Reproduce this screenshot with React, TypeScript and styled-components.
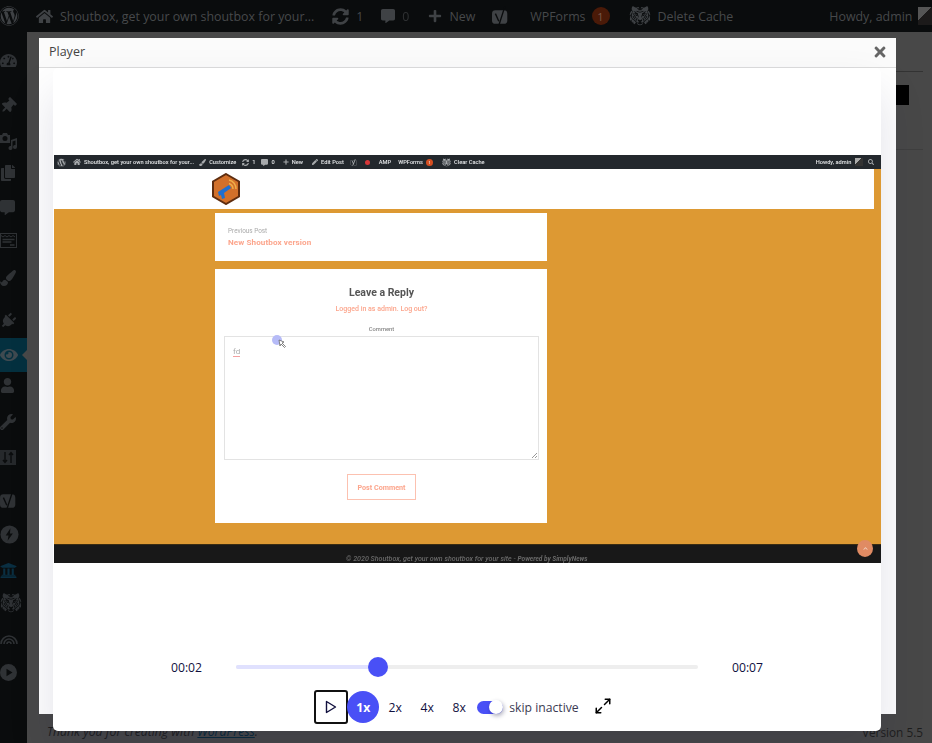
import * as React from 'react';
import styled, {createGlobalStyle} from 'styled-components';
import {
  FaWordpress, FaHome, FaSyncAlt, FaCommentAlt, FaPlus, FaYoast, FaTachometerAlt, FaThumbtack,
  FaCopy, FaPaintBrush, FaPlug, FaEye, FaUser, FaWrench, FaUniversity,
  FaPen, FaSearch, FaTimes, FaChevronUp,
} from 'react-icons/fa';
import {GiTigerHead} from 'react-icons/gi';
import {Maximize2} from 'lucide-react';

const GlobalStyle = createGlobalStyle`
  html, body {
    margin: 0;
    height: 743px;
    overflow: hidden;
    background: #484848;
  }
`;

const Page = styled.div`
  position: relative;
  height: 743px;
  display: flex;
  flex-direction: column;
  font-family: "Open Sans", "Noto Sans", sans-serif;
  overflow: hidden;
`;

/* wp admin bar behind the dialog */
const AdminBar = styled.div`
  flex: 0 0 32px;
  display: flex;
  align-items: center;
  background: #0a0c0d;
  color: #47494b;
  font-size: 12.4px;
  white-space: nowrap;
  overflow: hidden;
`;

const BarItem = styled.div<{ $left: number }>`
  display: flex;
  align-items: center;
  gap: 7px;
  margin-left: ${p => p.$left}px;
  svg { color: #3f4245; flex: none; }
`;

const Badge = styled.span`
  width: 18px;
  height: 18px;
  margin-left: -1px;
  border-radius: 50%;
  background: #4a1a08;
  color: #7a5a4c;
  font-size: 11px;
  display: flex;
  align-items: center;
  justify-content: center;
`;

const Avatar = styled.div`
  width: 15px;
  height: 18px;
  margin-left: -1px;
  background: linear-gradient(135deg, #555 0 40%, #1c1a1a 40% 100%);
`;

const Main = styled.div`
  flex: 1;
  display: flex;
  min-height: 0;
`;

const Sidebar = styled.div`
  flex: 0 0 27px;
  background: #0a0c0d;
  display: flex;
  flex-direction: column;
  padding-top: 11px;
  color: #2f3235;
`;

const SideItem = styled.div<{ $gap: number; $active?: boolean; $blue?: boolean }>`
  position: relative;
  height: 34px;
  margin-top: ${p => p.$gap}px;
  flex: none;
  display: flex;
  align-items: center;
  color: ${p => (p.$blue ? '#0a2f42' : '#2f3235')};
  background: ${p => (p.$active ? '#04303f' : 'transparent')};
  ${p => p.$active && `
    color: #3f4a50;
    &::after {
      content: '';
      position: absolute;
      right: 0;
      top: 50%;
      margin-top: -5px;
      border: 5px solid transparent;
      border-right-color: #484848;
      border-left-width: 0;
    }
  `}
`;

const Content = styled.div`
  flex: 1;
  display: flex;
  flex-direction: column;
  padding: 0 9px 0 20px;
  min-width: 0;
`;

const Rule = styled.div<{ $top: number; $color: string }>`
  height: 1px;
  margin-top: ${p => p.$top}px;
  background: ${p => p.$color};
`;

const BlackBox = styled.div`
  align-self: flex-end;
  width: 40px;
  height: 20px;
  margin: 13px 14px 0 0;
  background: #000;
`;

const WpFooter = styled.div`
  margin-top: auto;
  height: 21px;
  display: flex;
  justify-content: space-between;
  align-items: flex-start;
  font-size: 12.2px;
  line-height: 20px;
  color: #1e1e1e;
  em u { color: #0a2a3a; }
  span { font-size: 11.8px; }
`;

/* dialog */
const Modal = styled.div`
  position: absolute;
  left: 39px;
  top: 38px;
  width: 857px;
  height: 676px;
  background: #fff;
  display: flex;
  flex-direction: column;
`;

const ModalHeader = styled.div`
  flex: 0 0 30px;
  display: flex;
  align-items: center;
  justify-content: space-between;
  padding: 0 8px 2px 10px;
  box-sizing: border-box;
  background: #fbfbfb;
  border-bottom: 1px solid #dcdcdc;
  font-size: 12.5px;
  color: #444;
  svg { color: #666; }
`;

const Player = styled.div`
  flex: none;
  height: 663px;
  margin: 0 15px 0 14px;
  background: #fff;
  border-radius: 5px;
  box-shadow: 0 24px 48px rgba(17, 16, 62, 0.12);
  display: flex;
  flex-direction: column;
  position: relative;
`;

const Stage = styled.div`
  flex: 1;
  display: flex;
  align-items: center;
  justify-content: flex-end;
  min-height: 0;
  padding-bottom: 1px;
`;

/* the recorded page, shown very small */
const Frame = styled.div`
  position: relative;
  width: 827px;
  height: 408px;
  display: flex;
  flex-direction: column;
  background: #dd9933;
  font-family: Roboto, "Liberation Sans", sans-serif;
  overflow: hidden;
  filter: blur(0.5px);
`;

const MiniBar = styled.div`
  flex: 0 0 14px;
  display: flex;
  align-items: center;
  background: #23282d;
  color: #e4e6e8;
  font-size: 5.7px;
  font-weight: 500;
  white-space: nowrap;
`;

const MiniItem = styled.div<{ $left: number }>`
  display: flex;
  align-items: center;
  gap: 3px;
  margin-left: ${p => p.$left}px;
  svg { color: #a7aaad; flex: none; }
`;

const RedDot = styled.span`
  width: 5px;
  height: 5px;
  border-radius: 50%;
  background: #d63638;
`;

const MiniBadge = styled.span`
  width: 7px;
  height: 7px;
  border-radius: 50%;
  background: #d54e21;
  font-size: 4px;
  display: flex;
  align-items: center;
  justify-content: center;
`;

const MiniAvatar = styled.span`
  width: 8px;
  height: 8px;
  background: linear-gradient(135deg, #aaa 0 40%, #333 40% 100%);
`;

const SiteHead = styled.div`
  flex: 0 0 40px;
  width: 820px;
  background: #fff;
  display: flex;
  align-items: center;
  padding-left: 157px;
  box-sizing: border-box;
`;

const Column = styled.div`
  width: 332px;
  margin: 4px 0 0 161px;
  display: flex;
  flex-direction: column;
  gap: 8px;
`;

const Card = styled.div<{ $h: number; $pad: string }>`
  height: ${p => p.$h}px;
  padding: ${p => p.$pad};
  box-sizing: border-box;
  background: #fff;
  display: flex;
  flex-direction: column;
`;

const PrevLabel = styled.div`
  font-size: 6.4px;
  color: #aaa;
  line-height: 8px;
`;

const PrevTitle = styled.div`
  margin-top: 3px;
  font-size: 8.1px;
  font-weight: 700;
  color: #fca58c;
  line-height: 9px;
  letter-spacing: 0.1px;
`;

const ReplyTitle = styled.div`
  text-align: center;
  font-size: 10.5px;
  font-weight: 700;
  line-height: 14px;
  color: #555;
`;

const ReplyMeta = styled.div`
  margin-top: 5px;
  text-align: center;
  font-size: 7px;
  font-weight: 500;
  line-height: 9px;
  color: #fca58c;
`;

const CommentLabel = styled.div`
  margin-top: 12px;
  text-align: center;
  font-size: 5.8px;
  font-weight: 500;
  line-height: 7px;
  color: #888;
`;

const TextBox = styled.div`
  position: relative;
  margin-top: 3px;
  height: 124px;
  border: 1px solid #e3e3e3;
  box-sizing: border-box;
  padding: 10px 8px;
  font-size: 8px;
  line-height: 10px;
  color: #aaa;
  span { border-bottom: 1px solid #f3a0a0; }
  &::after {
    content: '';
    position: absolute;
    right: 1px;
    bottom: 1px;
    width: 5px;
    height: 5px;
    background: linear-gradient(135deg, transparent 50%, #999 50% 60%, transparent 60% 75%, #999 75% 85%, transparent 85%);
  }
`;

const PostButton = styled.div`
  align-self: center;
  margin-top: 14px;
  width: 69px;
  height: 26px;
  box-sizing: border-box;
  border: 1px solid #fcc1b0;
  color: #fca58c;
  font-size: 7.2px;
  font-weight: 700;
  display: flex;
  align-items: center;
  justify-content: center;
`;

const MiniFooter = styled.div`
  margin-top: auto;
  flex: 0 0 18px;
  box-sizing: border-box;
  padding: 10px 0 0 292px;
  background: #181818;
  border-top: 1px solid #3a2c12;
  color: #6a6a6a;
  font-size: 7.1px;
  line-height: 7px;
  font-style: italic;
  font-weight: 500;
  white-space: nowrap;
  small { font-size: 6.5px; font-weight: 700; }
`;

const ScrollTop = styled.div`
  position: absolute;
  left: 803px;
  top: 385px;
  width: 16px;
  height: 17px;
  border-radius: 50%;
  background: #e08b63;
  color: #f3d2c0;
  display: flex;
  align-items: center;
  justify-content: center;
`;

const CursorDot = styled.div`
  position: absolute;
  left: 218px;
  top: 180px;
  width: 10px;
  height: 10px;
  border-radius: 50%;
  background: #b6bbf7;
`;

const CursorIcon = styled.svg`
  position: absolute;
  left: 224px;
  top: 184px;
`;

/* rrweb style controller */
const Controller = styled.div`
  flex: 0 0 80px;
  display: flex;
  flex-direction: column;
  align-items: center;
`;

const TimeRow = styled.div`
  height: 32px;
  display: flex;
  align-items: center;
  color: #11103e;
  font-size: 12.2px;
`;

const Time = styled.span`
  width: 100px;
  text-align: center;
`;

const Track = styled.div`
  position: relative;
  width: 462px;
  height: 4px;
  margin: 0 -0.5px;
  background: #eee;
  border-radius: 2px;
`;

const Progress = styled.div`
  height: 100%;
  background: #e0e1fe;
  border-radius: 2px;
`;

const Handle = styled.div`
  position: absolute;
  top: -8px;
  width: 20px;
  height: 20px;
  margin-left: -10px;
  border-radius: 50%;
  background: #4950f6;
`;

const ButtonRow = styled.div`
  display: flex;
  align-items: center;
  margin: 7px 0 0 -8px;
  height: 34px;
  color: #11103e;
  font-size: 12.2px;
`;

const PlayButton = styled.div`
  width: 34px;
  height: 34px;
  margin-right: -1px;
  box-sizing: border-box;
  border: 2px solid #111;
  border-radius: 3px;
  display: flex;
  align-items: center;
  justify-content: center;
`;

const Speed = styled.div<{ $active?: boolean }>`
  width: 32px;
  height: 32px;
  border-radius: 50%;
  display: flex;
  align-items: center;
  justify-content: center;
  font-weight: ${p => (p.$active ? 700 : 400)};
  color: ${p => (p.$active ? '#fff' : '#11103e')};
  background: ${p => (p.$active ? '#4950f6' : 'transparent')};
`;

const Switch = styled.div`
  position: relative;
  width: 26px;
  height: 13px;
  margin-left: 2px;
  border-radius: 7px;
  background: #4950f6;
  &::after {
    content: '';
    position: absolute;
    right: 0;
    top: -0.5px;
    width: 14px;
    height: 14px;
    border-radius: 50%;
    background: #fff;
    box-shadow: 1px 2px 4px rgba(17, 16, 62, 0.35);
  }
`;

const SwitchLabel = styled.span`
  margin-left: 6px;
  color: #3b3a52;
`;

const FullScreen = styled.div`
  margin: -2px 0 0 15px;
  display: flex;
  color: #000;
`;

const YoastMark = ({size, color}: { size: number; color: string }) => (
  <svg width={size} height={size * 1.2} viewBox="0 0 20 24">
    <rect x="0" y="5" width="18" height="16" rx="4" fill={color} />
    <path d="M4 9l4 9M15 1L8 23" stroke="#0a0c0d" strokeWidth="1.600" fill="none" />
  </svg>
);

const MediaIcon = () => (
  <svg width="18" height="18" viewBox="0 0 18 18" fill="currentColor">
    <path d="M0 3h2l1-2h4l1 2h2v8H0zM5 4a2.500 2.500 0 1 0 0 5 2.500 2.500 0 0 0 0-5z" fillRule="evenodd" />
    <path d="M11 8l6-2v9a2 2 0 1 1-1.500-1.900V8.500l-3 1V16a2 2 0 1 1-1.500-1.900z" />
  </svg>
);

const Cloud = () => (
  <svg width="18" height="18" viewBox="0 0 18 18" fill="none" stroke="currentColor" strokeWidth="1.6">
    <path d="M1 15a8 8 0 0 1 16 0M4 15a5 5 0 0 1 10 0M7 15a2 2 0 0 1 4 0" />
  </svg>
);

const PlayDisc = () => (
  <svg width="17" height="17" viewBox="0 0 17 17">
    <circle cx="8.5" cy="8.5" r="8.5" fill="currentColor" />
    <path d="M6.5 4.8l6 3.700-6 3.700z" fill="#0a0c0d" />
  </svg>
);

const BoltDisc = () => (
  <svg width="19" height="19" viewBox="0 0 20 20">
    <circle cx="10" cy="10" r="9.5" fill="currentColor" />
    <path d="M11 3.5L6 11h3l-1 5.500L13.500 9h-3z" fill="#0a0c0d" />
  </svg>
);

const ClapBoard = () => (
  <svg width="17" height="17" viewBox="0 0 17 17" fill="none" stroke="currentColor">
    <rect x=".5" y="1.5" width="16" height="14" strokeWidth="1" />
    <path d="M1 3.500l2 1.500 2-1.500 2 1.500 2-1.500 2 1.500 2-1.500 2 1.500" />
    <path d="M2.500 7.500h12M2.500 10h9M10 13h4.500" strokeWidth="1.4" />
  </svg>
);

const SliderBox = () => (
  <svg width="16" height="15" viewBox="0 0 16 15" fill="none">
    <rect width="16" height="15" fill="#26292c" />
    <path d="M5 2v10M3 10l2 2.500L7 10M11 13V3M9 5l2-2.500L13 5" stroke="#0a0c0d" strokeWidth="1.4" />
  </svg>
);

const LogoHex = () => (
  <svg width="30" height="32" viewBox="0 0 30 32">
    <path d="M15 1l13 7.500v15L15 31 2 23.500v-15z" fill="#d2702a" stroke="#5e2d10" strokeWidth="2" />
    <path d="M18 7a9 9 0 0 1 7 9M18 10.500a6 6 0 0 1 4 5.500" stroke="#efb04a" fill="none" strokeWidth="1.4" />
    <path d="M7 19l11-7 2 3-7 5 1 5-3 1-1-4-2 1z" fill="#1f6fd0" />
  </svg>
);

const sideItems: { gap: number; icon: React.ReactNode; active?: boolean; blue?: boolean }[] = [
  {gap: 0, icon: <FaTachometerAlt size={17} />},
  {gap: 12, icon: <FaThumbtack size={16} style={{transform: 'rotate(45deg)'}} />},
  {gap: 1, icon: <MediaIcon />},
  {gap: -2, icon: <FaCopy size={16} />},
  {gap: 0, icon: <FaCommentAlt size={15} />},
  {gap: -1, icon: <ClapBoard />},
  {gap: 4, icon: <FaPaintBrush size={16} />},
  {gap: 9, icon: <FaPlug size={16} style={{transform: 'rotate(45deg)'}} />},
  {gap: 0, icon: <FaEye size={18} />, active: true},
  {gap: -4, icon: <FaUser size={15} />},
  {gap: 3, icon: <FaWrench size={16} />},
  {gap: 1, icon: <SliderBox />},
  {gap: 9, icon: <YoastMark size={17} color="#2f3235" />},
  {gap: 0, icon: <BoltDisc />},
  {gap: 2, icon: <FaUniversity size={17} />, blue: true},
  {gap: -1, icon: <GiTigerHead size={22} />},
  {gap: 1, icon: <Cloud />},
  {gap: 0, icon: <PlayDisc />},
];

export default function App() {
  return (
    <Page>
      <GlobalStyle />
      <AdminBar>
        <BarItem $left={-1}><FaWordpress size={20} /></BarItem>
        <BarItem $left={17}><FaHome size={17} />Shoutbox, get your own shoutbox for your...</BarItem>
        <BarItem $left={18}><FaSyncAlt size={17} />1</BarItem>
        <BarItem $left={18}><FaCommentAlt size={14} /><span style={{opacity: 0.6}}>0</span></BarItem>
        <BarItem $left={19}><FaPlus size={14} />New</BarItem>
        <BarItem $left={17}><YoastMark size={17} color="#3f4245" /></BarItem>
        <BarItem $left={21}>WPForms<Badge>1</Badge></BarItem>
        <BarItem $left={19}><GiTigerHead size={22} />Delete Cache</BarItem>
        <BarItem $left={96}>Howdy, admin<Avatar /></BarItem>
      </AdminBar>
      <Main>
        <Sidebar>
          {sideItems.map((item, i) => (
            <SideItem key={i} $gap={item.gap} $active={item.active} $blue={item.blue}>
              {item.icon}
            </SideItem>
          ))}
        </Sidebar>
        <Content>
          <Rule $top={39} $color="#333" />
          <BlackBox />
          <Rule $top={44} $color="#3f3f3f" />
          <WpFooter>
            <em>Thank you for creating with <u>WordPress</u>.</em>
            <span>Version 5.5</span>
          </WpFooter>
        </Content>
      </Main>

      <Modal>
        <ModalHeader>
          Player
          <FaTimes size={16} />
        </ModalHeader>
        <Player>
          <Stage>
            <Frame>
              <MiniBar>
                <MiniItem $left={3}><FaWordpress size={9} /></MiniItem>
                <MiniItem $left={7}><FaHome size={8} />Shoutbox, get your own shoutbox for your...</MiniItem>
                <MiniItem $left={5}><FaPaintBrush size={7} />Customize</MiniItem>
                <MiniItem $left={6}><FaSyncAlt size={7} />1</MiniItem>
                <MiniItem $left={6}><FaCommentAlt size={7} />0</MiniItem>
                <MiniItem $left={8}><FaPlus size={6} />New</MiniItem>
                <MiniItem $left={9}><FaPen size={6} />Edit Post</MiniItem>
                <MiniItem $left={6}><FaYoast size={7} /></MiniItem>
                <MiniItem $left={8}><RedDot /></MiniItem>
                <MiniItem $left={9}>AMP</MiniItem>
                <MiniItem $left={7}>WPForms<MiniBadge>1</MiniBadge></MiniItem>
                <MiniItem $left={9}><GiTigerHead size={9} />Clear Cache</MiniItem>
                <MiniItem $left={331}>Howdy, admin</MiniItem>
                <MiniItem $left={4}><MiniAvatar /></MiniItem>
                <MiniItem $left={5}><FaSearch size={6} /></MiniItem>
              </MiniBar>
              <SiteHead><LogoHex /></SiteHead>
              <Column>
                <Card $h={48} $pad="14px 13px">
                  <PrevLabel>Previous Post</PrevLabel>
                  <PrevTitle>New Shoutbox version</PrevTitle>
                </Card>
                <Card $h={254} $pad="17px 8px 0 9px">
                  <ReplyTitle>Leave a Reply</ReplyTitle>
                  <ReplyMeta>Logged in as admin. Log out?</ReplyMeta>
                  <CommentLabel>Comment</CommentLabel>
                  <TextBox><span>fd</span></TextBox>
                  <PostButton>Post Comment</PostButton>
                </Card>
              </Column>
              <MiniFooter>
                © 2020 Shoutbox, get your own shoutbox for your site - <small>Powered by SimplyNews</small>
              </MiniFooter>
              <ScrollTop><FaChevronUp size={5} /></ScrollTop>
              <CursorDot />
              <CursorIcon width="9" height="9" viewBox="0 0 9 9">
                <path d="M1 1l5 2-2 1 3.500 3.500-1 1L3 5 2 7z" fill="#fff" stroke="#666" strokeWidth=".8" />
              </CursorIcon>
            </Frame>
          </Stage>
          <Controller>
            <TimeRow>
              <Time>00:02</Time>
              <Track>
                <Progress style={{width: '30.7%'}} />
                <Handle style={{left: '30.7%'}} />
              </Track>
              <Time>00:07</Time>
            </TimeRow>
            <ButtonRow>
              <PlayButton>
                <svg width="12" height="14" viewBox="0 0 12 14" fill="none" stroke="#11103e" strokeWidth="1.4">
                  <path d="M1.500 1.500L10.500 7l-9 5.500z" strokeLinejoin="round" />
                </svg>
              </PlayButton>
              <Speed $active>1x</Speed>
              <Speed>2x</Speed>
              <Speed>4x</Speed>
              <Speed>8x</Speed>
              <Switch />
              <SwitchLabel>skip inactive</SwitchLabel>
              <FullScreen><Maximize2 size={18} strokeWidth={2} /></FullScreen>
            </ButtonRow>
          </Controller>
        </Player>
      </Modal>
    </Page>
  );
}
